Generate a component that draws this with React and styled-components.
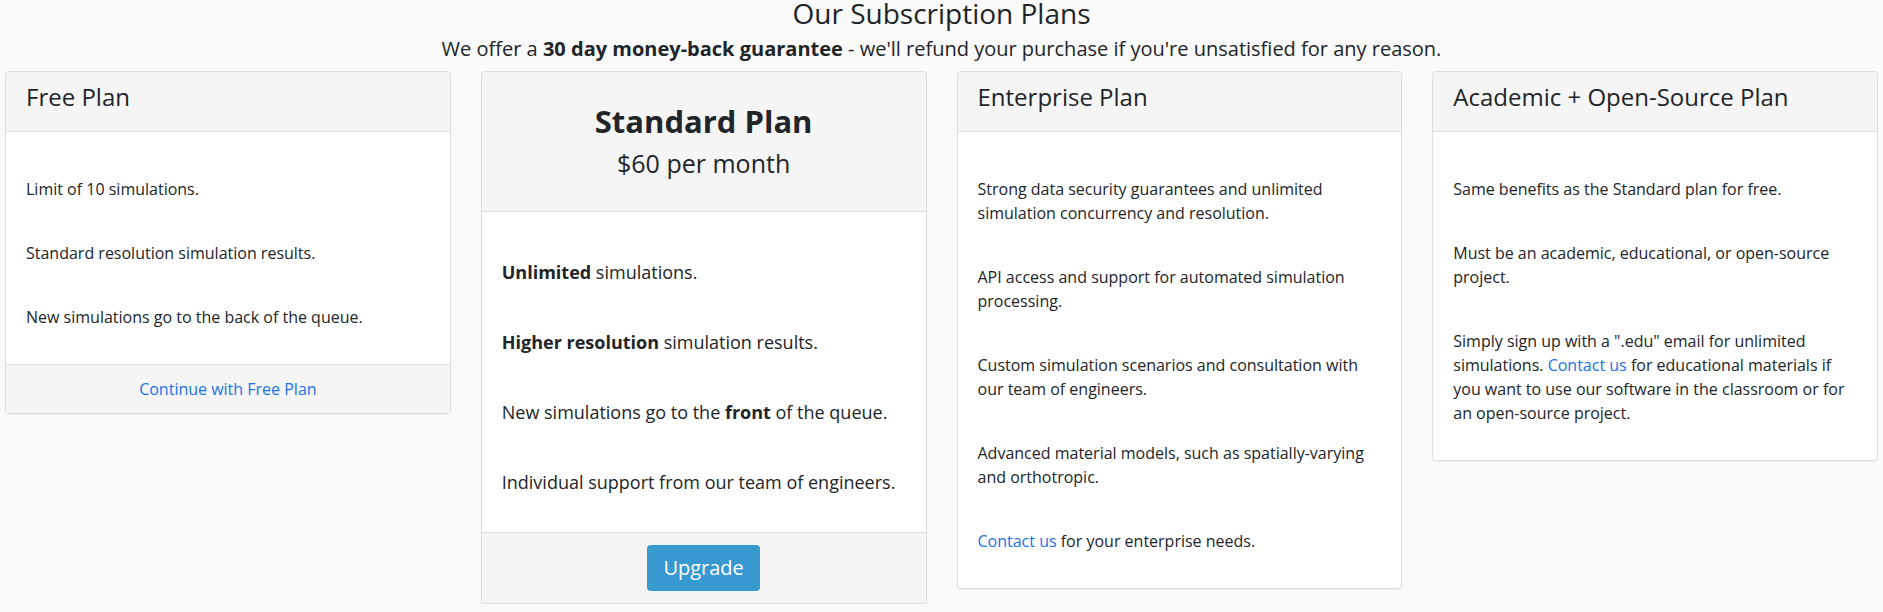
import styled, { createGlobalStyle } from "styled-components";

const GlobalStyle = createGlobalStyle`
  body {
    margin: 0;
    background: #fafafa;
    color: #212529;
    font-family: "Open Sans", "Liberation Sans", sans-serif;
  }
`;

const Page = styled.div`
  padding: 0 5px;
`;

const Title = styled.h2`
  margin: 0;
  font-size: 28px;
  font-weight: 400;
  line-height: 27px;
  text-align: center;
`;

const Subtitle = styled.p`
  margin: 10px 0;
  font-size: 20px;
  line-height: 24px;
  text-align: center;
`;

const Plans = styled.div`
  display: flex;
  align-items: flex-start;
  gap: 30px;
`;

const Card = styled.div`
  flex: 1;
  min-width: 0;
  background: #fff;
  border: 1px solid #ddd;
  border-radius: 4px;
  box-shadow: 0 1px 1px rgba(0, 0, 0, 0.05);
  overflow: hidden;
`;

const Header = styled.div`
  background: #f5f5f5;
  border-bottom: 1px solid #ddd;
  padding: ${(p) => (p.$featured ? "32px 20px 31px" : "13px 20px 22px")};
  text-align: ${(p) => (p.$featured ? "center" : "left")};
`;

const PlanName = styled.h3`
  margin: 0;
  font-size: ${(p) => (p.$featured ? "31px" : "24px")};
  font-weight: ${(p) => (p.$featured ? 700 : 400)};
  line-height: ${(p) => (p.$featured ? "34px" : "24px")};
`;

const Price = styled.div`
  margin-top: 8px;
  font-size: 25px;
  line-height: 34px;
`;

const Body = styled.div`
  display: flex;
  flex-direction: column;
  gap: ${(p) => (p.$featured ? "43px" : "40px")};
  padding: ${(p) => (p.$featured ? "47px 20px 36px" : "45px 20px 35px")};
  font-size: ${(p) => (p.$featured ? "18px" : "16px")};
  line-height: 1.5;
`;

const Feature = styled.p`
  margin: 0;
`;

const Link = styled.a`
  color: #1a73e8;
  text-decoration: none;
`;

const Footer = styled.div`
  background: #f5f5f5;
  border-top: 1px solid #ddd;
  padding: 12px 20px;
  font-size: 16px;
  line-height: 24px;
  text-align: center;
`;

const UpgradeButton = styled.button`
  padding: 8px 16px;
  border: none;
  border-radius: 4px;
  background: #3799cf;
  color: #fff;
  font-family: inherit;
  font-size: 20px;
  line-height: 30px;
  cursor: pointer;
`;

export default function App() {
  return (
    <Page>
      <GlobalStyle />
      <Title>Our Subscription Plans</Title>
      <Subtitle>
        We offer a <b>30 day money-back guarantee</b> - we'll refund your
        purchase if you're unsatisfied for any reason.
      </Subtitle>
      <Plans>
        <Card>
          <Header>
            <PlanName>Free Plan</PlanName>
          </Header>
          <Body>
            <Feature>Limit of 10 simulations.</Feature>
            <Feature>Standard resolution simulation results.</Feature>
            <Feature>New simulations go to the back of the queue.</Feature>
          </Body>
          <Footer>
            <Link href="#">Continue with Free Plan</Link>
          </Footer>
        </Card>

        <Card>
          <Header $featured>
            <PlanName $featured>Standard Plan</PlanName>
            <Price>$60 per month</Price>
          </Header>
          <Body $featured>
            <Feature>
              <b>Unlimited</b> simulations.
            </Feature>
            <Feature>
              <b>Higher resolution</b> simulation results.
            </Feature>
            <Feature>
              New simulations go to the <b>front</b> of the queue.
            </Feature>
            <Feature>Individual support from our team of engineers.</Feature>
          </Body>
          <Footer>
            <UpgradeButton>Upgrade</UpgradeButton>
          </Footer>
        </Card>

        <Card>
          <Header>
            <PlanName>Enterprise Plan</PlanName>
          </Header>
          <Body>
            <Feature>
              Strong data security guarantees and unlimited simulation
              concurrency and resolution.
            </Feature>
            <Feature>
              API access and support for automated simulation processing.
            </Feature>
            <Feature>
              Custom simulation scenarios and consultation with our team of
              engineers.
            </Feature>
            <Feature>
              Advanced material models, such as spatially-varying and
              orthotropic.
            </Feature>
            <Feature>
              <Link href="#">Contact us</Link> for your enterprise needs.
            </Feature>
          </Body>
        </Card>

        <Card>
          <Header>
            <PlanName>Academic + Open-Source Plan</PlanName>
          </Header>
          <Body>
            <Feature>Same benefits as the Standard plan for free.</Feature>
            <Feature>
              Must be an academic, educational, or open-source project.
            </Feature>
            <Feature>
              Simply sign up with a ".edu" email for unlimited simulations.{" "}
              <Link href="#">Contact us</Link> for educational materials if
              you want to use our software in the classroom or for an
              open-source project.
            </Feature>
          </Body>
        </Card>
      </Plans>
    </Page>
  );
}
